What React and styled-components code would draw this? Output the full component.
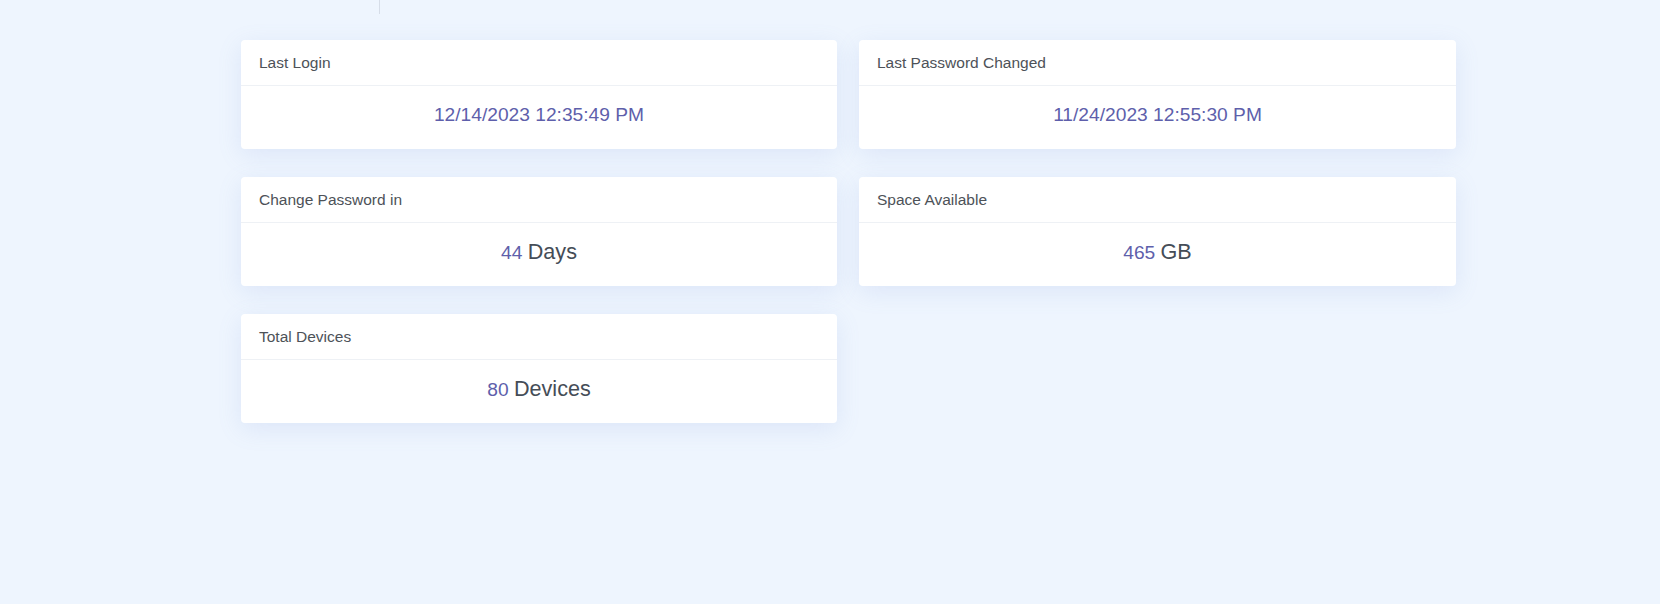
import React from "react";
import styled, { createGlobalStyle } from "styled-components";

const GlobalStyle = createGlobalStyle`
  html, body {
    margin: 0;
    padding: 0;
    background: #eef5fe;
  }
  body {
    font-family: "Liberation Sans", Arial, sans-serif;
    min-height: 604px;
  }
`;

const Page = styled.div`
  min-height: 604px;
  background: #eef5fe;
  display: flex;
  flex-direction: column;
`;

const TopStrip = styled.div`
  height: 14px;
  padding-left: 379px;
  display: flex;
`;

const Separator = styled.div`
  width: 1px;
  height: 14px;
  background: #d6dde8;
`;

const Grid = styled.div`
  margin: 26px 0 0 241px;
  width: 1215px;
  display: grid;
  grid-template-columns: 596px 597px;
  column-gap: 22px;
  row-gap: 28px;
  align-items: start;
`;

const Card = styled.div`
  background: #ffffff;
  border-radius: 4px;
  box-shadow: 0 6px 24px rgba(110, 145, 215, 0.14);
  overflow: hidden;
`;

const CardHeader = styled.div`
  height: 45px;
  box-sizing: content-box;
  border-bottom: 1px solid #eef1f5;
  padding: 0 18px;
  display: flex;
  align-items: center;
  font-size: 15.5px;
  color: #4d5258;
`;

const CardBody = styled.div`
  height: 63px;
  box-sizing: border-box;
  padding: 17px 18px 23px;
  text-align: center;
  font-size: 19.2px;
  line-height: 23px;
  color: #454d57;
`;

const Accent = styled.span`
  color: #5e5fab;
`;

const Unit = styled.span`
  font-size: 21.6px;
  line-height: 23px;
  color: #454d57;
`;

const stats = [
  { label: "Last Login", value: "12/14/2023 12:35:49 PM" },
  { label: "Last Password Changed", value: "11/24/2023 12:55:30 PM" },
  { label: "Change Password in", value: "44", unit: "Days" },
  { label: "Space Available", value: "465", unit: "GB" },
  { label: "Total Devices", value: "80", unit: "Devices" },
];

export default function App() {
  return (
    <>
      <GlobalStyle />
      <Page>
        <TopStrip>
          <Separator />
        </TopStrip>
        <Grid>
          {stats.map((s) => (
            <Card key={s.label}>
              <CardHeader>{s.label}</CardHeader>
              <CardBody>
                <Accent>{s.value}</Accent>
                {s.unit ? " " : null}
                {s.unit ? <Unit>{s.unit}</Unit> : null}
              </CardBody>
            </Card>
          ))}
        </Grid>
      </Page>
    </>
  );
}
